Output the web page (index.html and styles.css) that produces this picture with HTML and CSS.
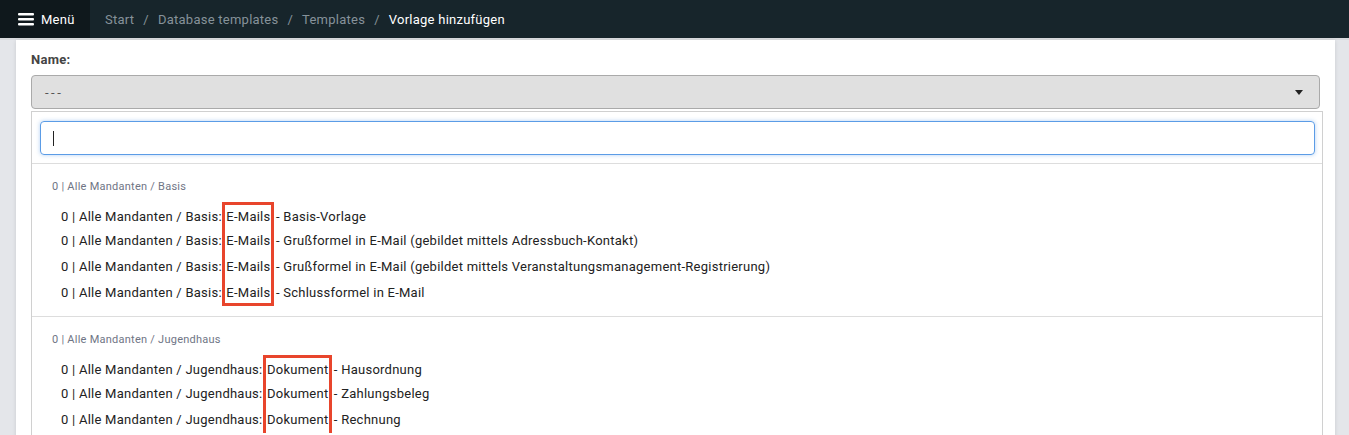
FILE: index.html
```html
<!DOCTYPE html>
<html>
<head>
	<title>Vorlage hinzufügen</title>
	<link rel="stylesheet" href="styles.css">
</head>
<body>
  <nav class="topbar">
    <a class="menu-btn" href="#">
      <svg class="burger" width="16" height="14" viewBox="0 0 16 14">
        <rect x="0" y="1" width="16" height="2.4" rx="1"/>
        <rect x="0" y="6" width="16" height="2.4" rx="1"/>
        <rect x="0" y="11" width="16" height="2.4" rx="1"/>
      </svg>
      Menü
    </a>
    <ol class="crumbs">
      <li><a href="#">Start</a></li>
      <li class="sep">/</li>
      <li><a href="#">Database templates</a></li>
      <li class="sep">/</li>
      <li><a href="#">Templates</a></li>
      <li class="sep">/</li>
      <li class="active">Vorlage hinzufügen</li>
    </ol>
  </nav>

  <main class="card">
    <label class="field-label">Name:</label>
    <div class="select">
      <span class="select-value">---</span>
      <span class="select-arrow"></span>
    </div>

    <div class="dropdown">
      <div class="search-wrap">
        <div class="search"><span class="caret"></span></div>
      </div>

      <div class="group">
        <div class="group-title">0 | Alle Mandanten / Basis</div>
        <div class="option">0 | Alle Mandanten / Basis: <span class="mark top">E-Mails</span> - Basis-Vorlage</div>
        <div class="option">0 | Alle Mandanten / Basis: <span class="mark">E-Mails</span> - Grußformel in E-Mail (gebildet mittels Adressbuch-Kontakt)</div>
        <div class="option">0 | Alle Mandanten / Basis: <span class="mark">E-Mails</span> - Grußformel in E-Mail (gebildet mittels Veranstaltungsmanagement-Registrierung)</div>
        <div class="option">0 | Alle Mandanten / Basis: <span class="mark bottom">E-Mails</span> - Schlussformel in E-Mail</div>
      </div>

      <div class="group">
        <div class="group-title">0 | Alle Mandanten / Jugendhaus</div>
        <div class="option">0 | Alle Mandanten / Jugendhaus: <span class="mark top">Dokument</span> - Hausordnung</div>
        <div class="option">0 | Alle Mandanten / Jugendhaus: <span class="mark">Dokument</span> - Zahlungsbeleg</div>
        <div class="option">0 | Alle Mandanten / Jugendhaus: <span class="mark">Dokument</span> - Rechnung</div>
      </div>
    </div>
  </main>
</body>
</html>
```

FILE: styles.css
```css
body{
  margin: 0;
  height: 435px;
  overflow: hidden;
  background: #e4e6ea;
  font-family: 'Roboto', 'Noto Sans', sans-serif;
  font-size: 13px;
  letter-spacing: .25px;
  color: #222;
}

/* top navigation */
.topbar{
  display: flex;
  align-items: center;
  height: 38px;
  background: #17252b;
  border-bottom: 2px solid #d9dbde;
}
.menu-btn{
  display: flex;
  align-items: center;
  gap: 7px;
  height: 100%;
  width: 90px;
  box-sizing: border-box;
  padding-left: 18px;
  background: #0f181c;
  color: #fff;
  text-decoration: none;
}
.burger{
  fill: #fff;
}
.crumbs{
  display: flex;
  list-style: none;
  margin: 0;
  padding: 0 0 0 15px;
}
.crumbs a{
  color: #86929a;
  text-decoration: none;
}
.crumbs .sep{
  color: #86929a;
  padding: 0 9px;
}
.crumbs .active{
  color: #fff;
}

/* card */
.card{
  margin: 0 14px 0 16px;
  padding: 12px 15px 0 15px;
  height: 400px;
  background: #fff;
  box-shadow: 0 1px 4px rgba(0,0,0,.12);
}
.field-label{
  display: block;
  font-weight: 700;
  color: #444;
  line-height: 16px;
  margin-bottom: 7px;
}
.select{
  display: flex;
  align-items: center;
  justify-content: space-between;
  height: 34px;
  box-sizing: border-box;
  padding: 0 12px 0 13px;
  background: #e0e0e0;
  border: 1px solid #aaa;
  border-radius: 4px;
  color: #555;
}
.select-value{
  letter-spacing: 2.5px;
}
.select-arrow{
  width: 0;
  height: 0;
  border-left: 4px solid transparent;
  border-right: 4px solid transparent;
  border-top: 5px solid #222;
  margin-right: 4px;
}

/* dropdown */
.dropdown{
  margin: 2px -3px 0 0;
  border: 1px solid #d0d0d0;
  background: #fff;
}
.search-wrap{
  padding: 9px 7px 8px 8px;
  border-bottom: 1px solid #ddd;
}
.search{
  display: flex;
  align-items: center;
  height: 34px;
  box-sizing: border-box;
  padding-left: 12px;
  border: 1px solid #5b9ce6;
  border-radius: 4px;
  box-shadow: 0 0 4px rgba(91,156,230,.45);
}
.caret{
  width: 1px;
  height: 15px;
  background: #222;
}
.group{
  padding: 16px 0 10px 0;
  border-bottom: 1px solid #ddd;
}
.group-title{
  padding-left: 20px;
  line-height: 14px;
  font-size: 11px;
  color: #6f7585;
  margin-bottom: 8px;
}
.option{
  padding-left: 29px;
  line-height: 26px;
  height: 26px;
  white-space: nowrap;
}
.mark{
  display: inline-block;
  box-sizing: border-box;
  height: 26px;
  margin: 0 -2px 0 -3px;
  padding: 0 1px;
  border-left: 3px solid #e8452c;
  border-right: 3px solid #e8452c;
}
.mark.top{
  border-top: 3px solid #e8452c;
  line-height: 23px;
}
.mark.bottom{
  border-bottom: 3px solid #e8452c;
  line-height: 26px;
}
```
